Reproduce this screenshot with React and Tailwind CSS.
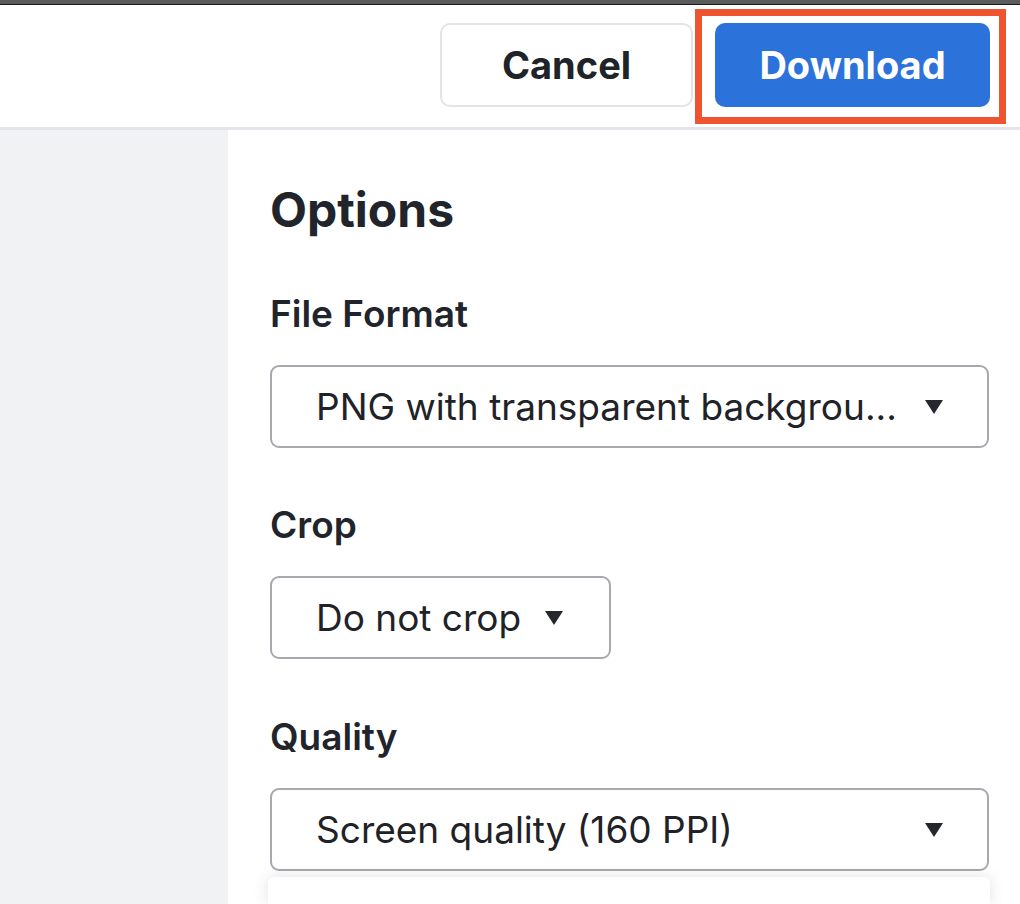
import React from "react";

/* ---------------- bits ---------------- */

function Caret() {
  return (
    <svg width="18" height="14" viewBox="0 0 18 14" className="shrink-0">
      <path d="M0 0 H18 L9 14 Z" fill="#24272c" />
    </svg>
  );
}

function Select({ value, wide = true }) {
  return (
    <div
      className={[
        "flex h-[83px] items-center rounded-[9px] border-2 border-[#a7a9ae] bg-white pl-[44px] pr-[44px]",
        wide ? "w-[719px] justify-between" : "w-[341px] gap-[24px]",
      ].join(" ")}
    >
      <span className="whitespace-nowrap text-[37px] leading-[44px] text-[#1f2227]">{value}</span>
      <Caret />
    </div>
  );
}

function Label({ children, top }) {
  return (
    <div className={`${top} text-[37px] font-semibold leading-[37px] text-[#21252b]`}>
      {children}
    </div>
  );
}

/* ---------------- main ---------------- */

export default function App() {
  return (
    <div
      className="flex h-[904px] w-[1020px] flex-col overflow-hidden bg-white"
      style={{ fontFamily: "Inter, 'Noto Sans', sans-serif" }}
    >
      <div className="h-[4px] bg-[#5b5b5b]" />
      <div className="h-[1px] bg-[#1a1a1a]" />

      {/* header */}
      <div className="flex h-[125px] shrink-0 items-start justify-end border-b-[3px] border-[#e4e5ea] pr-[30px] pt-[18px]">
        <button className="flex h-[84px] w-[253px] items-center justify-center rounded-[10px] border-2 border-[#e3e4e6] bg-white text-[38px] font-bold text-[#202328]">
          Cancel
        </button>
        <div className="relative ml-[22px]">
          <button className="flex h-[84px] w-[275px] items-center justify-center rounded-[10px] bg-[#2b72da] text-[38px] font-bold text-white">
            Download
          </button>
          <div className="pointer-events-none absolute -left-[20px] -right-[16px] -top-[14px] -bottom-[17px] border-[7px] border-[#ee5430]" />
        </div>
      </div>

      {/* body */}
      <div className="flex flex-1">
        <div className="w-[228px] bg-[#f1f2f4]" />
        <div className="flex flex-1 flex-col pl-[42px]">
          <div className="mt-[56px] text-[48px] font-bold leading-[48px] text-[#21252b]">Options</div>

          <Label top="mt-[61px]">File Format</Label>
          <div className="mt-[33px]">
            <Select value="PNG with transparent backgrou..." />
          </div>

          <Label top="mt-[58px]">Crop</Label>
          <div className="mt-[33px]">
            <Select value="Do not crop" wide={false} />
          </div>

          <Label top="mt-[59px]">Quality</Label>
          <div className="mt-[33px]">
            <Select value="Screen quality (160 PPI)" />
          </div>

          <div className="mt-[6px] w-[722px] -ml-[2px] flex-1 rounded-t-[6px] bg-white shadow-[0_0_16px_rgba(0,0,0,0.12)]" />
        </div>
      </div>
    </div>
  );
}
